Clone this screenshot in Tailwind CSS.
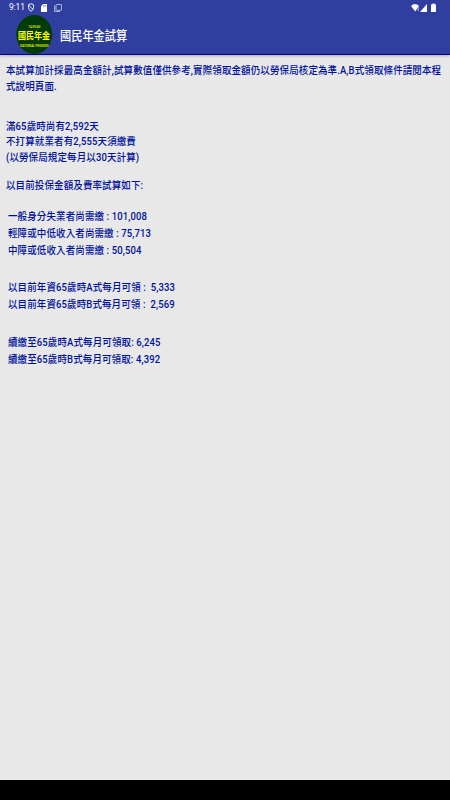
<!DOCTYPE html>
<html lang="zh-Hant"><head><meta charset="utf-8"><title>國民年金試算</title>
<script src="https://cdn.jsdelivr.net/npm/@tailwindcss/browser@4"></script></head>
<body class="w-[450px] h-[800px] overflow-hidden flex flex-col bg-[#e8e8e8] font-[Roboto,'Noto_Sans_CJK_TC',sans-serif]">
<header class="h-[55px] shrink-0 bg-[#303f9f] border-b border-[#00009c] text-white flex flex-col shadow-[0_1px_3px_rgba(0,0,0,0.25)]">
<div class="h-[15px] flex items-center pl-[9px] pr-[12px]">
<span class="text-[8.4px] leading-[15px] tracking-[-0.1px] w-[19px] whitespace-nowrap">9:11</span>
<svg class="w-[6px] h-[9px]" viewBox="0 0 6 9" fill="none" stroke="#e8ebff" stroke-width="1"><path d="M3 .7L5.5 1.7V4.5Q5.3 7 3 8.3Q.7 7 .5 4.5V1.7ZM.6 2.2L5.1 6.5"/></svg>
<svg class="w-[6px] h-[8px] ml-[7px]" viewBox="0 0 6 8"><path fill="#fff" d="M2 0H6V8H0V2.2Z"/><path stroke="#303f9f" stroke-width=".5" d="M2.5 1V2.5M3.7 1V2.5M4.9 1V2.5"/></svg>
<svg class="w-[8px] h-[8px] ml-[7px]" viewBox="0 0 8 8" fill="none" stroke="#aab3df" stroke-width="1"><rect x="2" y=".5" width="5.5" height="5.8" rx=".5"/><path d="M.6 1.5V7.5H6"/></svg>
<span class="grow"></span>
<svg class="w-[27px] h-[10px]" viewBox="0 0 27 10"><path fill="#fff" d="M0 3Q4 -1 8 3L4.2 8.6ZM16 1V9H9ZM20.5 1.2H21.5V.5H23.5V1.2H24.5Q25 1.2 25 2V8.5Q25 9 24.5 9H20.5Q20 9 20 8.5V2Q20 1.2 20.5 1.2Z"/><path fill="#8994ce" d="M6.5 4H8V8H6.5Z"/></svg>
</div>
<div class="h-[39px] flex items-center pl-[16px]">
<svg class="w-[37px] h-[39px] shrink-0 overflow-visible" viewBox="0 0 37 39"><ellipse cx="18.3" cy="19.5" rx="18" ry="19.5" fill="#003b08"/><g fill="#ffff00" text-anchor="middle" font-family="Roboto,'Noto Sans CJK TC',sans-serif"><text x="18.3" y="13" font-size="3.4" textLength="12" lengthAdjust="spacingAndGlyphs">TAIWAN</text><text x="18" y="24.3" font-size="9.5" font-weight="700" textLength="32" lengthAdjust="spacingAndGlyphs">國民年金</text><text x="18.3" y="31.8" font-size="3.6" font-weight="500" textLength="28" lengthAdjust="spacingAndGlyphs">NATIONAL PENSION</text></g></svg>
<h1 class="ml-[7px] mt-[5px] text-[11.2px] leading-[20px] font-medium origin-left scale-y-[1.15] whitespace-nowrap">國民年金試算</h1>
</div>
</header>
<main class="grow pl-[6px] pt-[7.5px] text-[9.5px] tracking-[0.11px] font-medium text-[#00109c] [&_p]:whitespace-pre [&_p]:origin-left [&_p]:scale-y-[1.13] [&_p]:w-max">
<section class="leading-[16px]"><p>本試算加計採最高金額計,試算數值僅供參考,實際領取金額仍以勞保局核定為準.A,B式領取條件請閱本程</p><p>式說明頁面.</p></section>
<section class="mt-[24px] leading-[15.8px]"><p>滿65歲時尚有2,592天</p><p>不打算就業者有2,555天須繳費</p><p>(以勞保局規定每月以30天計算)</p></section>
<section class="mt-[12.4px] leading-[16px]"><p>以目前投保金額及費率試算如下:</p></section>
<section class="mt-[13.4px] pl-[2px] leading-[17px]"><p>一般身分失業者尚需繳 : 101,008</p><p>輕障或中低收入者尚需繳 : 75,713</p><p>中障或低收入者尚需繳 : 50,504</p></section>
<section class="mt-[20.4px] pl-[2px] leading-[17px]"><p>以目前年資65歲時A式每月可領 :  5,333</p><p>以目前年資65歲時B式每月可領 :  2,569</p></section>
<section class="mt-[20.5px] pl-[2px] leading-[17px]"><p>續繳至65歲時A式每月可領取: 6,245</p><p>續繳至65歲時B式每月可領取: 4,392</p></section>
</main>
<nav class="h-[20px] shrink-0 bg-black"></nav>
</body></html>
